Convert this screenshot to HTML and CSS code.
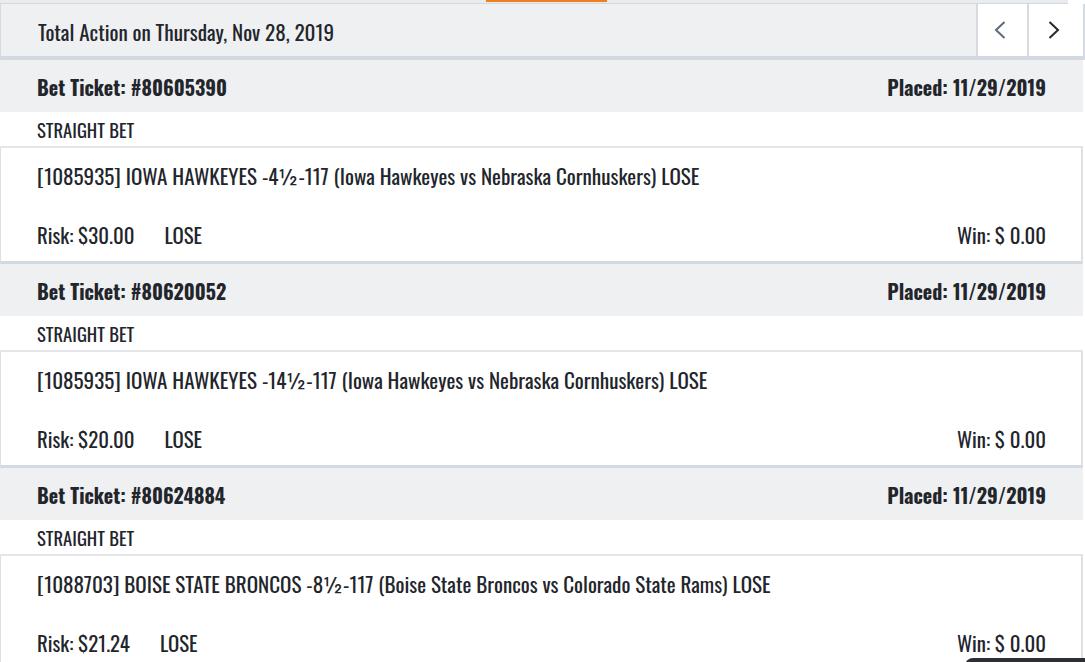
FILE: index.html
```html
<!DOCTYPE html>
<html>
<head>
<meta charset="utf-8">
<link rel="stylesheet" href="styles.css">
</head>
<body>
<div class="page">
  <div class="topstrip"><div class="tab-active"></div></div>
  <div class="day-header">
    <div class="day-title">Total Action on Thursday, Nov 28, 2019</div>
    <div class="nav">
      <button class="nav-btn prev" aria-label="Previous">
        <svg width="12" height="18" viewBox="0 0 12 18"><path d="M10.5 1 L2 9 L10.5 17" fill="none" stroke="#5d6b7b" stroke-width="2"/></svg>
      </button>
      <button class="nav-btn next" aria-label="Next">
        <svg width="12" height="18" viewBox="0 0 12 18"><path d="M1.5 1 L10 9 L1.5 17" fill="none" stroke="#23272e" stroke-width="2"/></svg>
      </button>
    </div>
  </div>

  <div class="ticket">
    <div class="ticket-head"><span>Bet Ticket: #80605390</span><span>Placed: 11/29/2019</span></div>
    <div class="ticket-type">STRAIGHT BET</div>
    <div class="ticket-body">
      <div class="desc">[1085935] IOWA HAWKEYES -4½-117 (Iowa Hawkeyes vs Nebraska Cornhuskers) LOSE</div>
      <div class="result"><span class="risk">Risk: $30.00</span><span class="status">LOSE</span><span class="win">Win: $ 0.00</span></div>
    </div>
  </div>

  <div class="ticket">
    <div class="ticket-head"><span>Bet Ticket: #80620052</span><span>Placed: 11/29/2019</span></div>
    <div class="ticket-type">STRAIGHT BET</div>
    <div class="ticket-body">
      <div class="desc">[1085935] IOWA HAWKEYES -14½-117 (Iowa Hawkeyes vs Nebraska Cornhuskers) LOSE</div>
      <div class="result"><span class="risk">Risk: $20.00</span><span class="status">LOSE</span><span class="win">Win: $ 0.00</span></div>
    </div>
  </div>

  <div class="ticket">
    <div class="ticket-head"><span>Bet Ticket: #80624884</span><span>Placed: 11/29/2019</span></div>
    <div class="ticket-type">STRAIGHT BET</div>
    <div class="ticket-body">
      <div class="desc">[1088703] BOISE STATE BRONCOS -8½-117 (Boise State Broncos vs Colorado State Rams) LOSE</div>
      <div class="result"><span class="risk">Risk: $21.24</span><span class="status">LOSE</span><span class="win">Win: $ 0.00</span></div>
    </div>
  </div>
  <div class="toast"></div>
</div>
</body>
</html>
```

FILE: styles.css
```css
* { box-sizing: border-box; }
html, body { margin: 0; padding: 0; background: #ffffff; }
body {
  font-family: "Oswald", "Roboto Condensed", "Liberation Sans Narrow", "DejaVu Sans Condensed", "Roboto", sans-serif;
  color: #22252b;
  overflow: hidden;
  height: 662px;
}
.page { position: relative; width: 1085px; height: 662px; overflow: hidden; }

.topstrip {
  position: relative;
  height: 4px;
  background: #e9ecef;
  border-bottom: 1px solid #d2d8de;
  width: 1068px;
}
.tab-active {
  position: absolute;
  left: 486px; top: 0;
  width: 121px; height: 2px;
  background: #f07f1f;
}

.day-header {
  display: flex;
  align-items: stretch;
  height: 56px;
  background: #eff0f2;
  border-left: 1px solid #d6dbe1;
  border-bottom: 4px solid #d3d9e0;
  width: 1085px;
}
.day-title {
  flex: 1;
  display: flex;
  align-items: center;
  padding-left: 37px;
  font-size: 21.1px;
  padding-top: 2px;
}
.nav { display: flex; gap: 2px; background: #d6dbe1; padding-left: 2px; padding-right: 2px; }
.nav-btn {
  width: 49px;
  border: 0;
  background: #ffffff;
  display: flex;
  align-items: center;
  justify-content: center;
  padding: 0;
}
.nav-btn.prev svg { margin-right: 5px; }
.nav-btn.next { width: 54px; }
.nav-btn.next svg { margin-right: 5px; }

.ticket { width: 1083px; }
.ticket-head {
  display: flex;
  justify-content: space-between;
  align-items: center;
  height: 52px;
  background: #eff0f2;
  padding: 2px 37px 0 37px;
  font-size: 20px;
  font-weight: 700;
}
.ticket-type {
  height: 36px;
  display: flex;
  align-items: center;
  padding-left: 37px;
  padding-top: 1px;
  font-size: 18.6px;
  border-bottom: 2px solid #e2e5e9;
}
.ticket-body {
  height: 116px;
  border-left: 1px solid #dde1e6;
  border-right: 2px solid #dde1e6;
  border-bottom: 3px solid #d3d9e0;
  padding: 15px 35px 0 36px;
  font-size: 21.1px;
  display: flex;
  flex-direction: column;
}
.desc { height: 26px; line-height: 26px; }
.result {
  display: flex;
  align-items: center;
  margin-top: 32px;
  height: 26px;
  font-size: 20.8px;
}
.risk { margin-right: 30px; }
.status { flex: 1; }

.toast {
  position: absolute;
  left: 965px;
  top: 658px;
  width: 125px;
  height: 10px;
  background: #2e2f33;
  border-radius: 8px 0 0 0;
}
```
